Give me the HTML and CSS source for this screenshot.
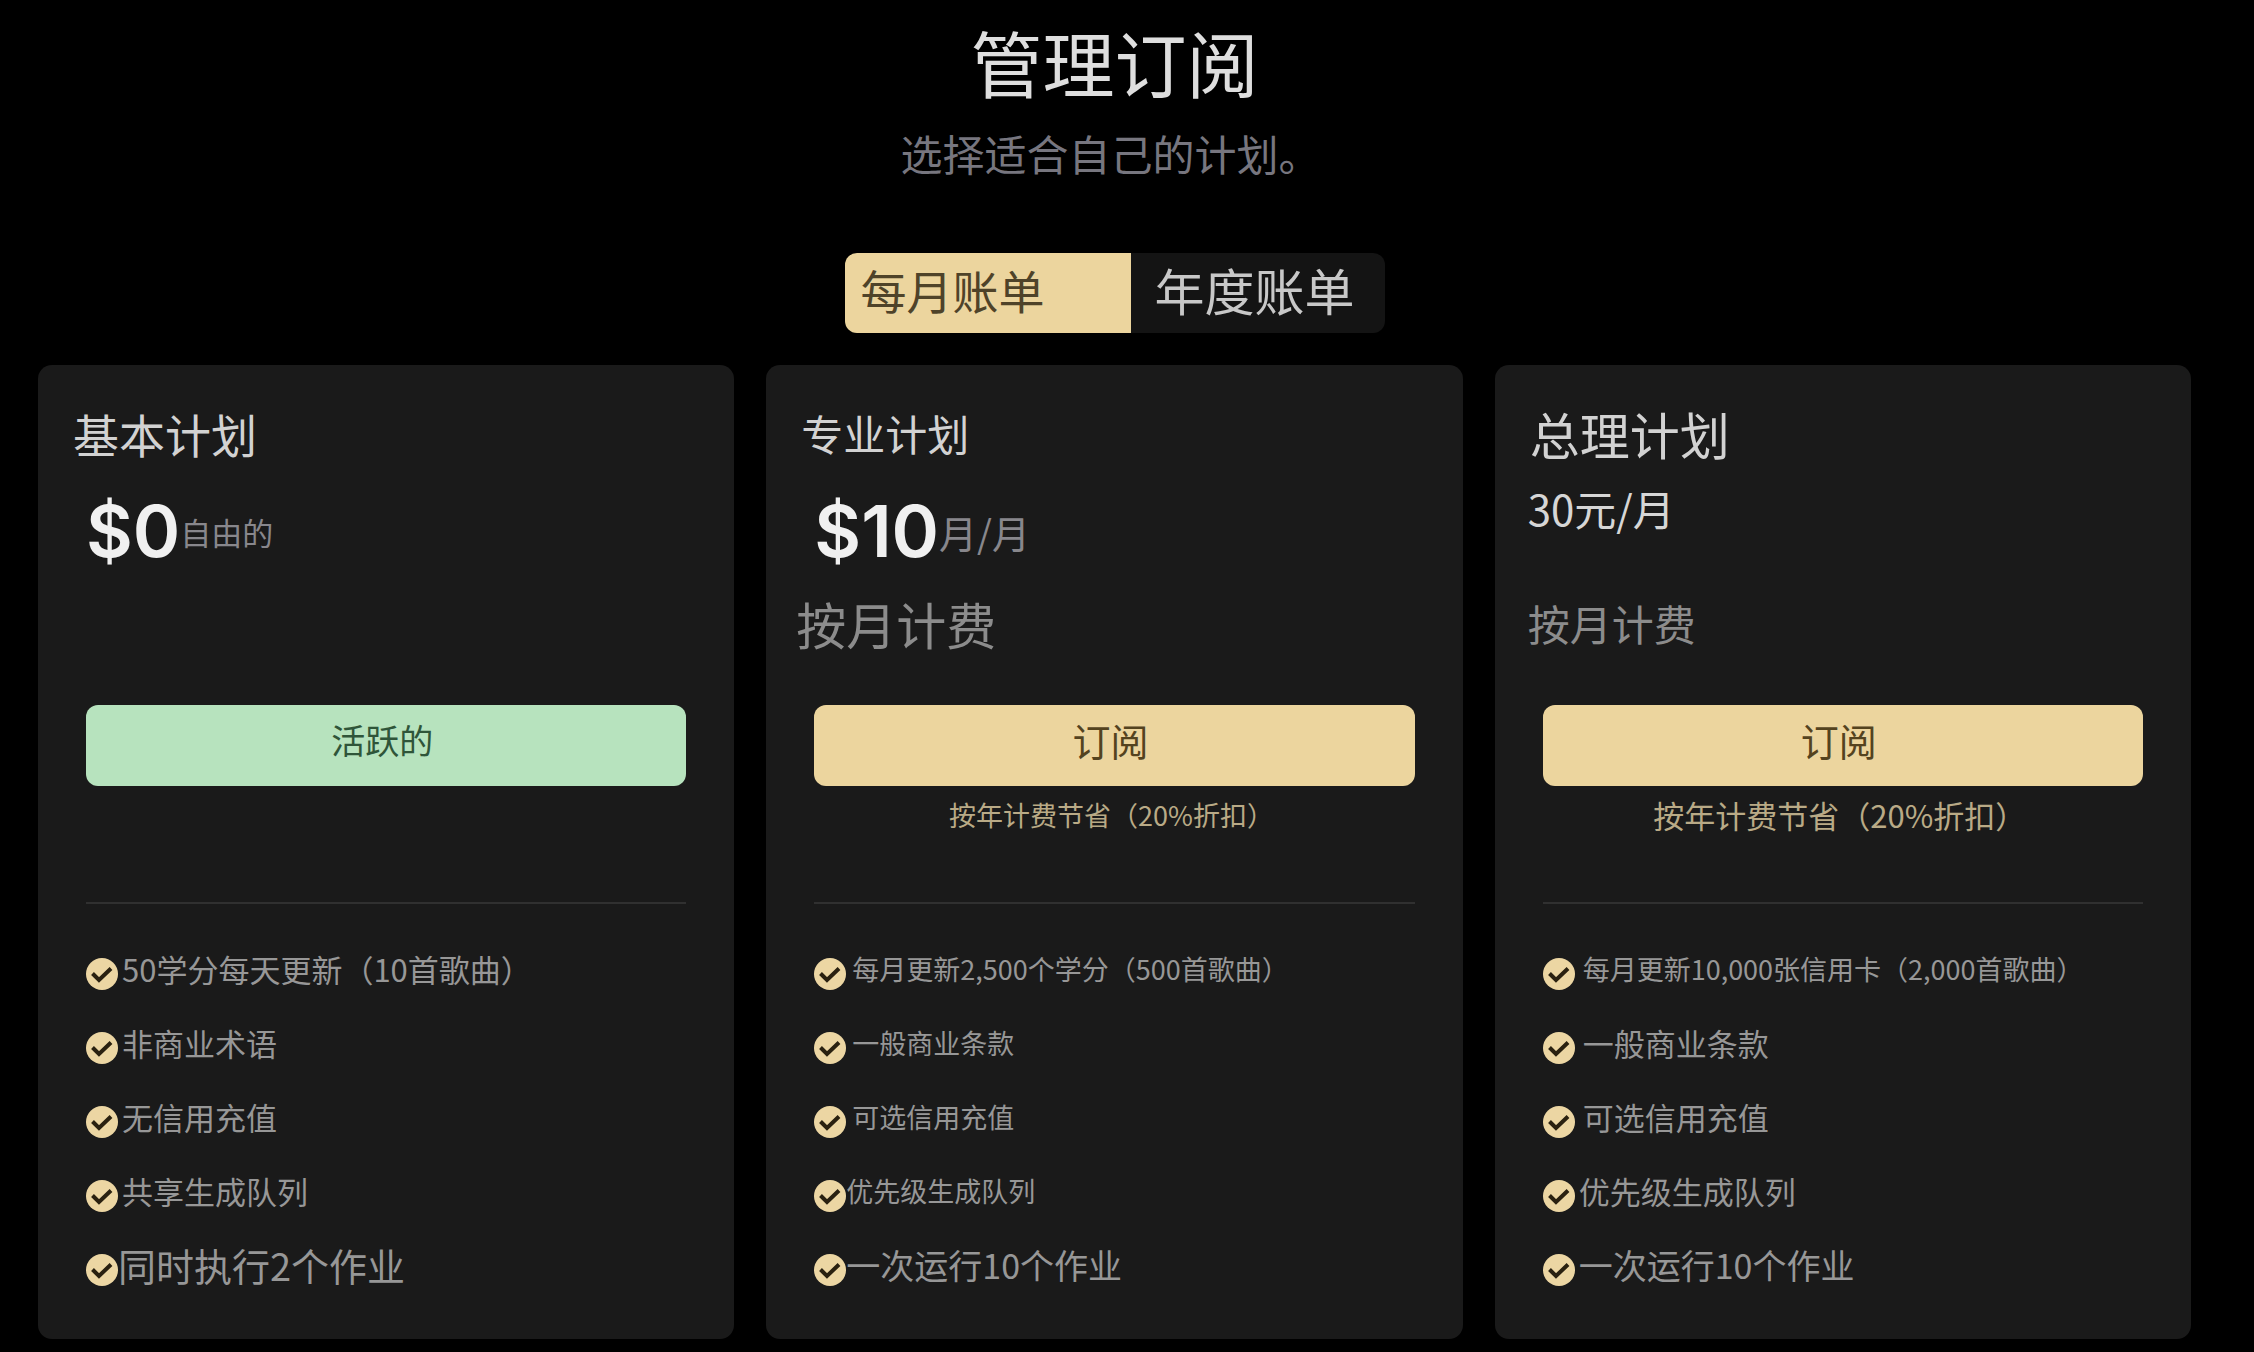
FILE: index.html
```html
<!DOCTYPE html>
<html lang="zh-CN">
<head>
    <meta charset="UTF-8">
    <meta name="viewport" content="width=device-width, initial-scale=1.0">
    <title>管理订阅</title>
    <link rel="stylesheet" href="styles.css">
</head>
<body>
    <!-- Check icon shared by all feature lists -->
    <svg class="sprite" width="0" height="0" aria-hidden="true">
        <symbol id="check" viewBox="0 0 32 32">
            <circle cx="16" cy="16" r="16" fill="#ecd6a3"/>
            <path d="M6.5 15.5l6.5 6.5L25 10.5" fill="none" stroke="#2a2110" stroke-width="4"/>
        </symbol>
    </svg>

    <header class="header">
        <h1>管理订阅</h1>
        <p>选择适合自己的计划。</p>
    </header>

    <div class="toggle">
        <button type="button" class="toggle-btn active">每月账单</button>
        <button type="button" class="toggle-btn">年度账单</button>
    </div>

    <main class="plans">
        <section class="plan basic">
            <h2>基本计划</h2>
            <div class="price">
                <span class="amount">$0</span>
                <span class="period">自由的</span>
            </div>
            <p class="billing"></p>
            <button type="button" class="plan-btn current">活跃的</button>
            <p class="saving"></p>
            <hr>
            <ul class="features">
                <li><svg class="icon"><use href="#check"/></svg><span>50学分每天更新（10首歌曲）</span></li>
                <li><svg class="icon"><use href="#check"/></svg><span>非商业术语</span></li>
                <li><svg class="icon"><use href="#check"/></svg><span>无信用充值</span></li>
                <li><svg class="icon"><use href="#check"/></svg><span>共享生成队列</span></li>
                <li class="jobs"><svg class="icon"><use href="#check"/></svg><span>同时执行2个作业</span></li>
            </ul>
        </section>

        <section class="plan pro">
            <h2>专业计划</h2>
            <div class="price">
                <span class="amount">$10</span>
                <span class="period">月/月</span>
            </div>
            <p class="billing">按月计费</p>
            <button type="button" class="plan-btn">订阅</button>
            <p class="saving">按年计费节省（20%折扣）</p>
            <hr>
            <ul class="features">
                <li><svg class="icon"><use href="#check"/></svg><span>每月更新2,500个学分（500首歌曲）</span></li>
                <li><svg class="icon"><use href="#check"/></svg><span>一般商业条款</span></li>
                <li><svg class="icon"><use href="#check"/></svg><span>可选信用充值</span></li>
                <li class="queue"><svg class="icon"><use href="#check"/></svg><span>优先级生成队列</span></li>
                <li class="jobs"><svg class="icon"><use href="#check"/></svg><span>一次运行10个作业</span></li>
            </ul>
        </section>

        <section class="plan premier">
            <h2>总理计划</h2>
            <div class="price">30元/月</div>
            <p class="billing">按月计费</p>
            <button type="button" class="plan-btn">订阅</button>
            <p class="saving">按年计费节省（20%折扣）</p>
            <hr>
            <ul class="features">
                <li class="credits"><svg class="icon"><use href="#check"/></svg><span>每月更新10,000张信用卡（2,000首歌曲）</span></li>
                <li><svg class="icon"><use href="#check"/></svg><span>一般商业条款</span></li>
                <li><svg class="icon"><use href="#check"/></svg><span>可选信用充值</span></li>
                <li class="queue"><svg class="icon"><use href="#check"/></svg><span>优先级生成队列</span></li>
                <li class="jobs"><svg class="icon"><use href="#check"/></svg><span>一次运行10个作业</span></li>
            </ul>
        </section>
    </main>

    <script>
        const toggleButtons = document.querySelectorAll('.toggle-btn');

        toggleButtons.forEach(function(button) {
            button.addEventListener('click', function() {
                toggleButtons.forEach(b => b.classList.remove('active'));
                button.classList.add('active');
            });
        });
    </script>
</body>
</html>
```

FILE: styles.css
```css
* {
    box-sizing: border-box;
}

body {
    margin: 0;
    padding: 20px 63px 12px 38px;
    background-color: #000;
    color: #d6d6d6;
    font-family: "Noto Sans CJK SC", sans-serif;
}

h1,
h2,
p,
ul {
    margin: 0;
    padding: 0;
    font-weight: 400;
}

button {
    border: none;
    font-family: inherit;
    cursor: pointer;
}

.sprite {
    position: absolute;
}

/* Header */
.header {
    text-align: center;
}

.header h1 {
    color: #dedede;
    font-size: 72px;
    line-height: 82px;
}

.header p {
    margin-top: 20px;
    padding-right: 8px;
    color: #77767f;
    font-size: 42px;
    line-height: 62px;
}

/* Monthly / yearly switch */
.toggle {
    display: flex;
    width: 540px;
    margin: 69px auto 32px;
    border-radius: 12px;
    overflow: hidden;
}

.toggle-btn {
    flex: 1;
    height: 80px;
    padding: 0 24px 8px;
    background-color: #141414;
    color: #c8c8c8;
    font-size: 50px;
    line-height: 60px;
    text-align: left;
}

.toggle-btn.active {
    flex: 0 0 286px;
    padding-left: 16px;
    background-color: #ecd59e;
    color: #4f4329;
    font-size: 46px;
}

/* Plans */
.plans {
    display: grid;
    grid-template-columns: repeat(3, 1fr);
    gap: 32px;
}

.plan {
    padding: 38px 48px 32px;
    background-color: #1a1a1a;
    border-radius: 14px;
}

.plan h2 {
    margin-left: -13px;
    color: #d2d2d2;
    font-size: 46px;
    line-height: 60px;
}

.pro h2 {
    font-size: 42px;
}

.premier h2 {
    font-size: 50px;
}

.price {
    display: flex;
    align-items: center;
    height: 100px;
    margin-top: 18px;
}

.amount {
    color: #f0f0f0;
    font-family: Inter, sans-serif;
    font-size: 72px;
    font-weight: 600;
    line-height: 90px;
}

.period {
    color: #88878c;
    font-size: 31px;
}

.pro .period {
    font-size: 38px;
}

.premier .price {
    margin-left: -15px;
    padding-bottom: 48px;
    font-size: 42px;
}

.billing {
    min-height: 60px;
    margin: 12px 0 52px -18px;
    color: #8c8c8c;
    font-size: 50px;
    line-height: 60px;
}

.premier .billing {
    margin-left: -15px;
    font-size: 42px;
}

.plan-btn {
    display: block;
    width: 100%;
    height: 81px;
    padding: 0 8px 12px 0;
    border-radius: 12px;
    background-color: #ecd59e;
    color: #54431f;
    font-size: 38px;
}

.plan-btn.current {
    background-color: #b7e3be;
    color: #2f5539;
    font-size: 34px;
}

.saving {
    min-height: 40px;
    margin-top: 9px;
    padding-right: 6px;
    color: #b9aa86;
    font-size: 27px;
    line-height: 40px;
    text-align: center;
}

.premier .saving {
    font-size: 31px;
}

.plan hr {
    height: 2px;
    margin: 67px 0 33px;
    border: none;
    background-color: #303030;
}

/* Feature lists */
.features {
    color: #979797;
    font-size: 31px;
    list-style: none;
}

.features li {
    display: flex;
    align-items: center;
    gap: 4px;
    height: 74px;
    white-space: nowrap;
}

.features span {
    padding-bottom: 12px;
}

.icon {
    flex: none;
    width: 32px;
    height: 32px;
}

.pro .features {
    font-size: 27px;
}

.pro .features li {
    gap: 6px;
}

.premier .features li {
    gap: 8px;
}

.premier .features .credits {
    font-size: 27px;
}

.pro .features .queue {
    gap: 0;
}

.premier .features .queue {
    gap: 4px;
}

.features .jobs,
.pro .features .jobs {
    gap: 0;
    font-size: 34px;
}

.premier .features .jobs {
    gap: 4px;
    font-size: 34px;
}

.basic .features .jobs {
    font-size: 38px;
}
```
